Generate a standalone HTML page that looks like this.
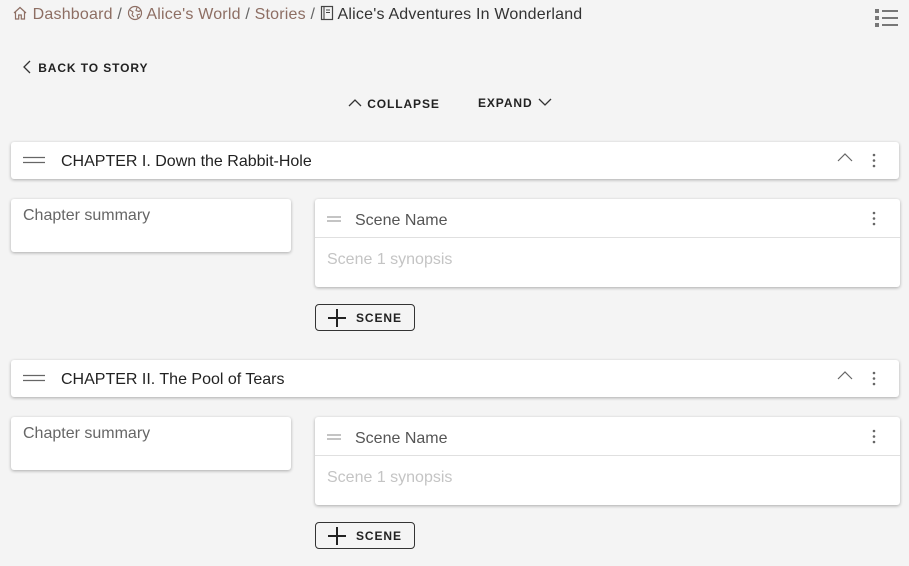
<!DOCTYPE html>
<html><head><style>
body{margin:0;width:909px;height:566px;background:#f4f4f4;font-family:"Liberation Sans",sans-serif;position:relative;overflow:hidden}
.a{position:absolute}
.bc{left:12px;top:5px;font-size:16px;color:#333;white-space:nowrap;letter-spacing:0.2px}
.bc .l{color:#8d6e63}
.bc .s{color:#666}
.btn{font-size:12px;font-weight:bold;letter-spacing:0.9px;color:#222}
.card{background:#fff;border-radius:3px;box-shadow:0 1px 3px rgba(0,0,0,.3)}
.ch{left:11px;width:888px;height:37px;font-size:16px;color:#222}
.sum{left:11px;width:280px;height:53px;font-size:16px;color:#666}
.sc{left:315px;width:585px;height:88px}
.add{left:315px;width:98px;height:25px;border:1px solid #333;border-radius:4px;font-size:12px;font-weight:bold;letter-spacing:0.9px;color:#222}
</style></head><body>
<div class="a bc"><svg width="16" height="16" viewBox="0 0 16 16" style="vertical-align:-2px"><path d="M2 8L8 2.5 14 8M3.5 6.8V14h3.2v-4h2.6v4h3.2V6.8" fill="none" stroke="#8d6e63" stroke-width="1.2"/></svg><span class="l"> Dashboard</span><span class="s"> / </span><svg width="16" height="16" viewBox="0 0 16 16" style="vertical-align:-2px"><circle cx="8" cy="8" r="6.5" fill="none" stroke="#8d6e63" stroke-width="1.2"/><path d="M3 5l3 2-1 3 2 2M10 2.5l-1 3 3 1 1.5-1M11 13l-1-3 3-1" fill="none" stroke="#8d6e63" stroke-width="1.1"/></svg><span class="l"> Alice's World</span><span class="s"> / </span><span class="l">Stories</span><span class="s"> / </span><svg width="14" height="16" viewBox="0 0 14 16" style="vertical-align:-2px"><rect x="1.5" y="1.5" width="11" height="13" fill="none" stroke="#444" stroke-width="1.2"/><path d="M4 1.5v13M6 5h4M6 7.5h4" stroke="#444" stroke-width="1.1"/></svg> Alice's Adventures In Wonderland</div>
<svg class="a" style="left:873px;top:8px" width="26" height="20"><rect x="2" y="1" width="4" height="4" fill="#777"/><rect x="2" y="8" width="4" height="4" fill="#777"/><rect x="2" y="15" width="4" height="4" fill="#777"/><path d="M9 3h16M9 10h16M9 17h16" stroke="#777" stroke-width="2"/></svg>
<div class="a btn" style="left:22px;top:60px"><svg width="12" height="14" style="vertical-align:-2px"><path d="M8 1L2 7l6 6" fill="none" stroke="#333" stroke-width="1.3"/></svg> BACK TO STORY</div>
<div class="a btn" style="left:347px;top:96px"><svg width="16" height="12" style="vertical-align:0"><path d="M2 10l6-6 6 6" fill="none" stroke="#333" stroke-width="1.3"/></svg> COLLAPSE</div>
<div class="a btn" style="left:478px;top:96px">EXPAND <svg width="16" height="12" style="vertical-align:-1px"><path d="M2 3l6 6 6-6" fill="none" stroke="#333" stroke-width="1.3"/></svg></div>

<div class="a card ch" style="top:142px"><svg class="a" style="left:12px;top:14px" width="22" height="8"><path d="M0 1.5h22M0 6.5h22" stroke="#666" stroke-width="1.3"/></svg><span class="a" style="left:50px;top:11px">CHAPTER I. Down the Rabbit-Hole</span><svg class="a" style="left:826px;top:10px" width="16" height="12"><path d="M1 9l7-7 7 7" fill="none" stroke="#666" stroke-width="1.2"/></svg><svg class="a" style="left:861px;top:11px" width="4" height="16"><circle cx="2" cy="2" r="1.3" fill="#666"/><circle cx="2" cy="7.5" r="1.3" fill="#666"/><circle cx="2" cy="13" r="1.3" fill="#666"/></svg></div>
<div class="a card sum" style="top:199px"><span class="a" style="left:12px;top:8px">Chapter summary</span></div>
<div class="a card sc" style="top:199px"><svg class="a" style="left:12px;top:17px" width="14" height="6"><path d="M0 1h14M0 5h14" stroke="#888" stroke-width="1.1"/></svg><span class="a" style="left:40px;top:13px;font-size:16px;color:#555">Scene Name</span><svg class="a" style="left:557px;top:12px" width="4" height="16"><circle cx="2" cy="2" r="1.3" fill="#666"/><circle cx="2" cy="7.5" r="1.3" fill="#666"/><circle cx="2" cy="13" r="1.3" fill="#666"/></svg><div class="a" style="left:0;top:38px;width:585px;height:1px;background:#e0e0e0"></div><span class="a" style="left:12px;top:52px;font-size:16px;color:#c4c4c4">Scene 1 synopsis</span></div>
<div class="a add" style="top:304px"><svg class="a" style="left:12px;top:4px" width="18" height="18"><path d="M9 0v18M0 9h18" stroke="#222" stroke-width="2"/></svg><span class="a" style="left:40px;top:6px">SCENE</span></div>

<div class="a card ch" style="top:360px"><svg class="a" style="left:12px;top:14px" width="22" height="8"><path d="M0 1.5h22M0 6.5h22" stroke="#666" stroke-width="1.3"/></svg><span class="a" style="left:50px;top:11px">CHAPTER II. The Pool of Tears</span><svg class="a" style="left:826px;top:10px" width="16" height="12"><path d="M1 9l7-7 7 7" fill="none" stroke="#666" stroke-width="1.2"/></svg><svg class="a" style="left:861px;top:11px" width="4" height="16"><circle cx="2" cy="2" r="1.3" fill="#666"/><circle cx="2" cy="7.5" r="1.3" fill="#666"/><circle cx="2" cy="13" r="1.3" fill="#666"/></svg></div>
<div class="a card sum" style="top:417px"><span class="a" style="left:12px;top:8px">Chapter summary</span></div>
<div class="a card sc" style="top:417px"><svg class="a" style="left:12px;top:17px" width="14" height="6"><path d="M0 1h14M0 5h14" stroke="#888" stroke-width="1.1"/></svg><span class="a" style="left:40px;top:13px;font-size:16px;color:#555">Scene Name</span><svg class="a" style="left:557px;top:12px" width="4" height="16"><circle cx="2" cy="2" r="1.3" fill="#666"/><circle cx="2" cy="7.5" r="1.3" fill="#666"/><circle cx="2" cy="13" r="1.3" fill="#666"/></svg><div class="a" style="left:0;top:38px;width:585px;height:1px;background:#e0e0e0"></div><span class="a" style="left:12px;top:52px;font-size:16px;color:#c4c4c4">Scene 1 synopsis</span></div>
<div class="a add" style="top:522px"><svg class="a" style="left:12px;top:4px" width="18" height="18"><path d="M9 0v18M0 9h18" stroke="#222" stroke-width="2"/></svg><span class="a" style="left:40px;top:6px">SCENE</span></div>
</body></html>
